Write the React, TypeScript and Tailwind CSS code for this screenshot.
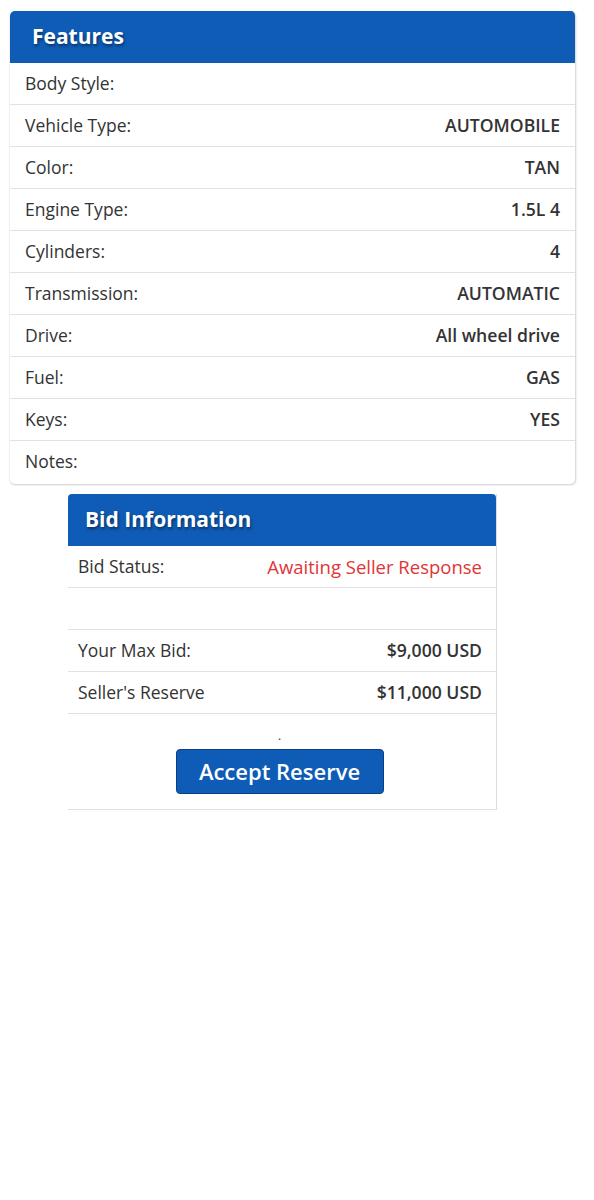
const features: [string, string][] = [
  ['Body Style:', ''],
  ['Vehicle Type:', 'AUTOMOBILE'],
  ['Color:', 'TAN'],
  ['Engine Type:', '1.5L 4'],
  ['Cylinders:', '4'],
  ['Transmission:', 'AUTOMATIC'],
  ['Drive:', 'All wheel drive'],
  ['Fuel:', 'GAS'],
  ['Keys:', 'YES'],
  ['Notes:', ''],
]

function Row({ label, value, valueClass }: { label: string; value: string; valueClass?: string }) {
  return (
    <div className="flex h-[41px] items-center justify-between">
      <span className="text-[17.5px] text-[#333]">{label}</span>
      <span className={valueClass ?? 'text-[17.6px] font-semibold text-[#333]'}>{value}</span>
    </div>
  )
}

export default function App() {
  return (
    <div className="min-h-[1200px] bg-white pt-[11px] font-['Open_Sans',sans-serif]">
      {/* features card */}
      <div className="ml-[10px] w-[566px] overflow-hidden rounded-[5px] border-r border-[#dcdcdc] bg-white shadow-[0_1px_2px_rgba(0,0,0,0.2)]">
        <div className="flex h-[52px] items-center bg-[#0e5cb6] px-[22px]">
          <h2 className="text-[21px] font-bold text-white [text-shadow:1px_2px_3px_rgba(0,0,0,0.45)]">Features</h2>
        </div>
        {features.map(([l, v], i) => (
          <div key={l} className={`px-[15px] ${i === features.length - 1 ? 'pb-[2px]' : 'border-b border-[#e2e2e2]'}`}>
            <Row label={l} value={v} />
          </div>
        ))}
      </div>

      {/* bid info */}
      <div className="ml-[68px] mt-[10px] w-[429px] border-r border-[#dcdcdc]">
        <div className="flex h-[52px] items-center rounded-t-[4px] bg-[#0e5cb6] px-[17px]">
          <h2 className="text-[21px] font-bold text-white [text-shadow:1px_2px_3px_rgba(0,0,0,0.45)]">Bid Information</h2>
        </div>
        <div className="border-b border-[#e2e2e2] pl-[10px] pr-[14px]">
          <Row label="Bid Status:" value="Awaiting Seller Response" valueClass="text-[18.5px] text-[#e03535]" />
        </div>
        <div className="h-[42px] border-b border-[#e2e2e2]" />
        <div className="border-b border-[#e2e2e2] pl-[10px] pr-[14px]">
          <Row label="Your Max Bid:" value="$9,000 USD" />
        </div>
        <div className="border-b border-[#e2e2e2] pl-[10px] pr-[14px]">
          <Row label="Seller's Reserve" value="$11,000 USD" />
        </div>
        <div className="flex flex-col items-center border-b border-[#e2e2e2] pb-[15px] pr-[5px] pt-[12px]">
          <span className="h-[20px] text-[12px] leading-[20px] text-[#333]">.</span>
          <button className="mt-[3px] h-[45px] w-[208px] rounded-[4px] border border-[#0a3f85] bg-[#0e5cb6] text-[22px] font-semibold text-white">
            Accept Reserve
          </button>
        </div>
      </div>
    </div>
  )
}
